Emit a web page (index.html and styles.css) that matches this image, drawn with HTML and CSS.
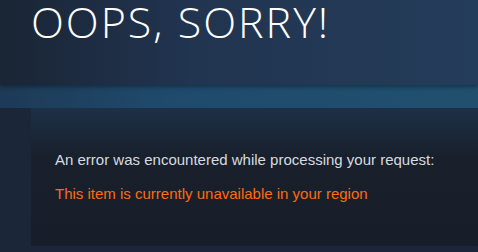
FILE: index.html
```html
<!DOCTYPE html>
<html>
<head>
<meta charset="utf-8">
<link rel="stylesheet" href="styles.css">
</head>
<body>
<div class="page">
  <header class="head">
    <h1 class="title">OOPS, SORRY!</h1>
  </header>
  <div class="band"></div>
  <div class="content">
    <div class="error-box">
      <p class="msg">An error was encountered while processing your request:</p>
      <p class="err">This item is currently unavailable in your region</p>
    </div>
  </div>
</div>
</body>
</html>
```
FILE: styles.css
```css
* { box-sizing: border-box; }
html, body { margin: 0; padding: 0; }
body {
  width: 478px;
  height: 252px;
  overflow: hidden;
  background: #1b2738;
  font-family: "Liberation Sans", Arial, sans-serif;
}
.page { display: flex; flex-direction: column; height: 252px; }
.head {
  height: 85px;
  background: linear-gradient(90deg, #1a2535 0%, #213450 40%, #243d5a 100%);
  box-shadow: 0 2px 4px rgba(0,0,0,0.35);
  position: relative;
  z-index: 1;
  padding-left: 31px;
  padding-top: 0;
}
.title {
  margin: 0;
  font-family: "Open Sans", sans-serif;
  font-weight: 300;
  font-size: 43px;
  letter-spacing: 2px;
  line-height: 44px;
  color: #ffffff;
}
.band {
  height: 23px;
  background: linear-gradient(90deg, #1d3a56 0%, #1f4a6c 35%, #21506f 100%);
}
.content {
  flex: 1;
  padding-left: 31px;
  padding-bottom: 6px;
  display: flex;
}
.error-box {
  flex: 1;
  background: linear-gradient(180deg, #1d3046 0%, #18202c 35%, #171e2a 100%);
  padding: 43px 0 0 24px;
}
.msg {
  margin: 0;
  font-size: 15px;
  line-height: 18px;
  color: #d6dbe0;
}
.err {
  margin: 16px 0 0 0;
  font-size: 15px;
  line-height: 18px;
  color: #ff6a10;
}
```
